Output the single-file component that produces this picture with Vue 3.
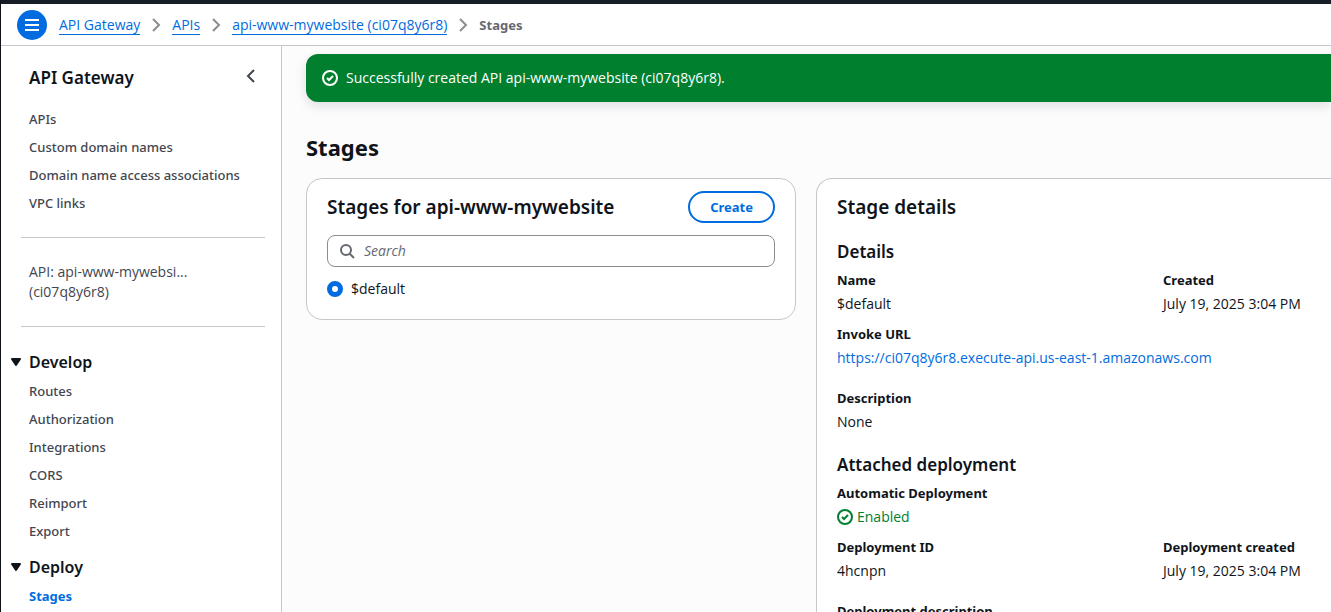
<script setup>
import { ref } from 'vue'

const crumbs = ['API Gateway', 'APIs', 'api-www-mywebsite (ci07q8y6r8)']
const mainLinks = ['APIs', 'Custom domain names', 'Domain name access associations', 'VPC links']
const sections = [
  { title: 'Develop', links: ['Routes', 'Authorization', 'Integrations', 'CORS', 'Reimport', 'Export'] },
  { title: 'Deploy', links: ['Stages'] },
]
const active = 'Stages'
const stage = ref('$default')
const query = ref('')
</script>

<template>
  <div class="shell">
    <header class="topbar">
      <button class="menu" type="button" aria-label="Open navigation">
        <svg width="16" height="16" viewBox="0 0 16 16" fill="none" stroke="currentColor" stroke-width="2">
          <path d="M1 3h14M1 8h14M1 13h14" />
        </svg>
      </button>
      <nav class="crumbs" aria-label="Breadcrumbs">
        <template v-for="c in crumbs" :key="c">
          <a href="#">{{ c }}</a>
          <svg width="16" height="16" viewBox="0 0 16 16" fill="none" stroke="currentColor" stroke-width="2">
            <path d="M5 2l6 6-6 6" />
          </svg>
        </template>
        <span class="current">Stages</span>
      </nav>
    </header>

    <div class="body">
      <aside class="sidebar">
        <div class="side-head">
          <h2>API Gateway</h2>
          <button class="collapse" type="button" aria-label="Close navigation">
            <svg width="16" height="16" viewBox="0 0 16 16" fill="none" stroke="currentColor" stroke-width="2">
              <path d="M11 2L5 8l6 6" />
            </svg>
          </button>
        </div>
        <ul class="links">
          <li v-for="l in mainLinks" :key="l"><a href="#">{{ l }}</a></li>
        </ul>
        <hr />
        <p class="api">API: api-www-mywebsi...<br />(ci07q8y6r8)</p>
        <hr />
        <section v-for="s in sections" :key="s.title" class="section">
          <h3>
            <button type="button" aria-expanded="true">
              <svg width="16" height="16" viewBox="0 0 16 16" fill="currentColor" stroke="currentColor" stroke-width="2" stroke-linejoin="round">
                <path d="M4 5h8l-4 6z" />
              </svg>
              {{ s.title }}
            </button>
          </h3>
          <ul class="links">
            <li v-for="l in s.links" :key="l">
              <a href="#" :class="{ active: l === active }">{{ l }}</a>
            </li>
          </ul>
        </section>
      </aside>

      <main class="content">
        <div class="flash" role="status">
          <svg width="16" height="16" viewBox="0 0 16 16" fill="none" stroke="currentColor" stroke-width="2">
            <circle cx="8" cy="8" r="7" />
            <path d="M5 8l2 2 4-4" />
          </svg>
          <span>Successfully created API api-www-mywebsite (ci07q8y6r8).</span>
        </div>

        <h1>Stages</h1>

        <div class="columns">
          <section class="card stages">
            <div class="card-head">
              <h2>Stages for api-www-mywebsite</h2>
              <button class="create" type="button">Create</button>
            </div>
            <div class="search">
              <svg width="16" height="16" viewBox="0 0 16 16" fill="none" stroke="currentColor" stroke-width="2">
                <circle cx="7" cy="7" r="5" />
                <path d="M15 15l-4.500-4.500" />
              </svg>
              <input v-model="query" type="text" placeholder="Search" aria-label="Search stages" />
            </div>
            <label class="option">
              <input v-model="stage" type="radio" name="stage" value="$default" />
              <span>$default</span>
            </label>
          </section>

          <section class="card details">
            <div class="card-head"><h2>Stage details</h2></div>
            <h3>Details</h3>
            <dl>
              <div><dt>Name</dt><dd>$default</dd></div>
              <div><dt>Created</dt><dd>July 19, 2025 3:04 PM</dd></div>
              <div class="wide"><dt>Invoke URL</dt><dd><a href="#">https://ci07q8y6r8.execute-api.us-east-1.amazonaws.com</a></dd></div>
            </dl>
            <dl class="spaced">
              <div class="wide"><dt>Description</dt><dd>None</dd></div>
            </dl>
            <h3 class="second">Attached deployment</h3>
            <dl>
              <div class="wide">
                <dt>Automatic Deployment</dt>
                <dd class="enabled">
                  <svg width="16" height="16" viewBox="0 0 16 16" fill="none" stroke="currentColor" stroke-width="2">
                    <circle cx="8" cy="8" r="7" />
                    <path d="M5 8l2 2 4-4" />
                  </svg>
                  Enabled
                </dd>
              </div>
              <div><dt>Deployment ID</dt><dd>4hcnpn</dd></div>
              <div><dt>Deployment created</dt><dd>July 19, 2025 3:04 PM</dd></div>
            </dl>
            <dl class="spaced">
              <div class="wide"><dt>Deployment description</dt></div>
            </dl>
          </section>
        </div>
      </main>
    </div>
  </div>
</template>

<style>
body {
  background: #fff;
}
</style>

<style scoped>
* {
  box-sizing: border-box;
}
.shell {
  display: flex;
  flex-direction: column;
  height: 100vh;
  overflow: hidden;
  border-top: 4px solid #161d26;
  border-left: 1px solid #0f141a;
  font-family: "Open Sans", "Noto Sans", sans-serif;
  font-size: 14px;
  line-height: 20px;
  color: #0f141a;
}
h1, h2, h3, ul, dl, dd, p {
  margin: 0;
  padding: 0;
}
h1, h2, h3 {
  font-family: "Noto Sans", sans-serif;
  font-weight: 600;
}
ul {
  list-style: none;
}
a {
  color: #006ce0;
  text-decoration: none;
}
button {
  font: inherit;
  color: inherit;
  padding: 0;
  border: 0;
  background: none;
  cursor: pointer;
}
svg {
  display: block;
  flex: none;
}
.topbar {
  display: flex;
  align-items: center;
  flex: none;
  gap: 12px;
  height: 42px;
  padding-left: 16px;
  border-bottom: 1px solid #c6c6cd;
}
.menu {
  display: grid;
  place-items: center;
  width: 30px;
  height: 30px;
  border-radius: 50%;
  background: #006ce0;
  color: #fff;
}
.crumbs {
  display: flex;
  align-items: center;
  gap: 8px;
  color: #8c8c94;
}
.crumbs a {
  border-bottom: 1px solid #006ce0;
  line-height: 19px;
}
.links a {
  display: block;
  font-family: "Noto Sans", sans-serif;
  font-size: 13px;
  font-weight: 500;
  color: #424650;
}
.current,
.links a.active,
.create,
dt {
  font-family: "Noto Sans", sans-serif;
  font-size: 13px;
  font-weight: 700;
}
.current {
  color: #656871;
}
.body {
  display: flex;
  flex: 1;
  min-height: 0;
}
.sidebar {
  flex: none;
  width: 281px;
  padding: 20px 16px 0 20px;
  border-right: 1px solid #c6c6cd;
  overflow: auto;
  scrollbar-width: none;
}
.side-head {
  display: flex;
  align-items: flex-start;
  justify-content: space-between;
  padding: 0 6px 0 8px;
  margin-bottom: 15px;
}
.side-head h2 {
  font-size: 17px;
  line-height: 24px;
}
.collapse {
  margin-top: 2px;
  color: #424650;
}
.links {
  padding-left: 8px;
}
.links li {
  padding: 4px 0;
}
.links a.active {
  color: #006ce0;
}
hr {
  height: 1px;
  margin: 20px 0 24px;
  border: 0;
  background: #c6c6cd;
}
.api {
  padding: 0 0 4px 8px;
  color: #424650;
}
.section {
  margin-bottom: 11px;
}
.section h3 {
  margin-bottom: 4px;
  font-size: 16px;
  line-height: 22px;
}
.section h3 button {
  display: flex;
  align-items: center;
  gap: 5px;
  margin-left: -13px;
}
.content {
  flex: 1;
  min-width: 0;
  padding: 8px 0 0 24px;
  background: #fcfcfd;
  overflow: auto;
  scrollbar-width: none;
}
.flash {
  display: flex;
  align-items: center;
  gap: 8px;
  height: 48px;
  padding: 0 16px;
  border-radius: 12px 0 0 12px;
  background: #00802f;
  color: #fff;
  box-shadow: 0 4px 12px rgba(0, 7, 22, 0.12);
}
h1 {
  margin-top: 30px;
  font-size: 22px;
  font-weight: 700;
  line-height: 30px;
}
.columns {
  display: grid;
  grid-template-columns: minmax(0, 490px) minmax(0, 1fr);
  gap: 20px;
  align-items: start;
  margin-top: 16px;
}
.card {
  padding: 12px 20px 20px;
  border: 1px solid #c6c6cd;
  border-radius: 16px;
  background: #fff;
}
.details {
  border-right: 0;
  border-radius: 16px 0 0 0;
  padding-right: 0;
}
.card-head {
  display: flex;
  align-items: center;
  justify-content: space-between;
  height: 32px;
}
.card-head h2 {
  font-size: 19px;
  line-height: 24px;
}
.create {
  height: 32px;
  padding: 0 20px;
  border: 2px solid #006ce0;
  border-radius: 20px;
  color: #006ce0;
}
.search {
  display: flex;
  align-items: center;
  gap: 9px;
  height: 32px;
  margin-top: 12px;
  padding: 0 11px;
  border: 1px solid #8c8c94;
  border-radius: 8px;
  color: #656871;
}
.search input {
  flex: 1;
  min-width: 0;
  padding: 0;
  border: 0;
  outline: 0;
  background: none;
  font: inherit;
}
.search input::placeholder {
  color: #656871;
  font-style: italic;
  opacity: 1;
}
.option {
  display: flex;
  align-items: center;
  gap: 8px;
  margin-top: 12px;
}
.option input {
  appearance: none;
  width: 16px;
  height: 16px;
  margin: 0;
  border: 5px solid #006ce0;
  border-radius: 50%;
  background: #fff;
}
.details h3 {
  margin-top: 17px;
  font-size: 17px;
  line-height: 24px;
}
.details h3.second {
  margin-top: 21px;
}
dl {
  display: grid;
  grid-template-columns: 326px minmax(0, 1fr);
  row-gap: 10px;
  margin-top: 6px;
}
dl.spaced {
  margin-top: 20px;
}
.wide {
  grid-column: 1 / -1;
}
dd {
  padding: 4px 0 0;
}
.enabled {
  display: flex;
  align-items: center;
  gap: 4px;
  color: #00802f;
}
</style>
